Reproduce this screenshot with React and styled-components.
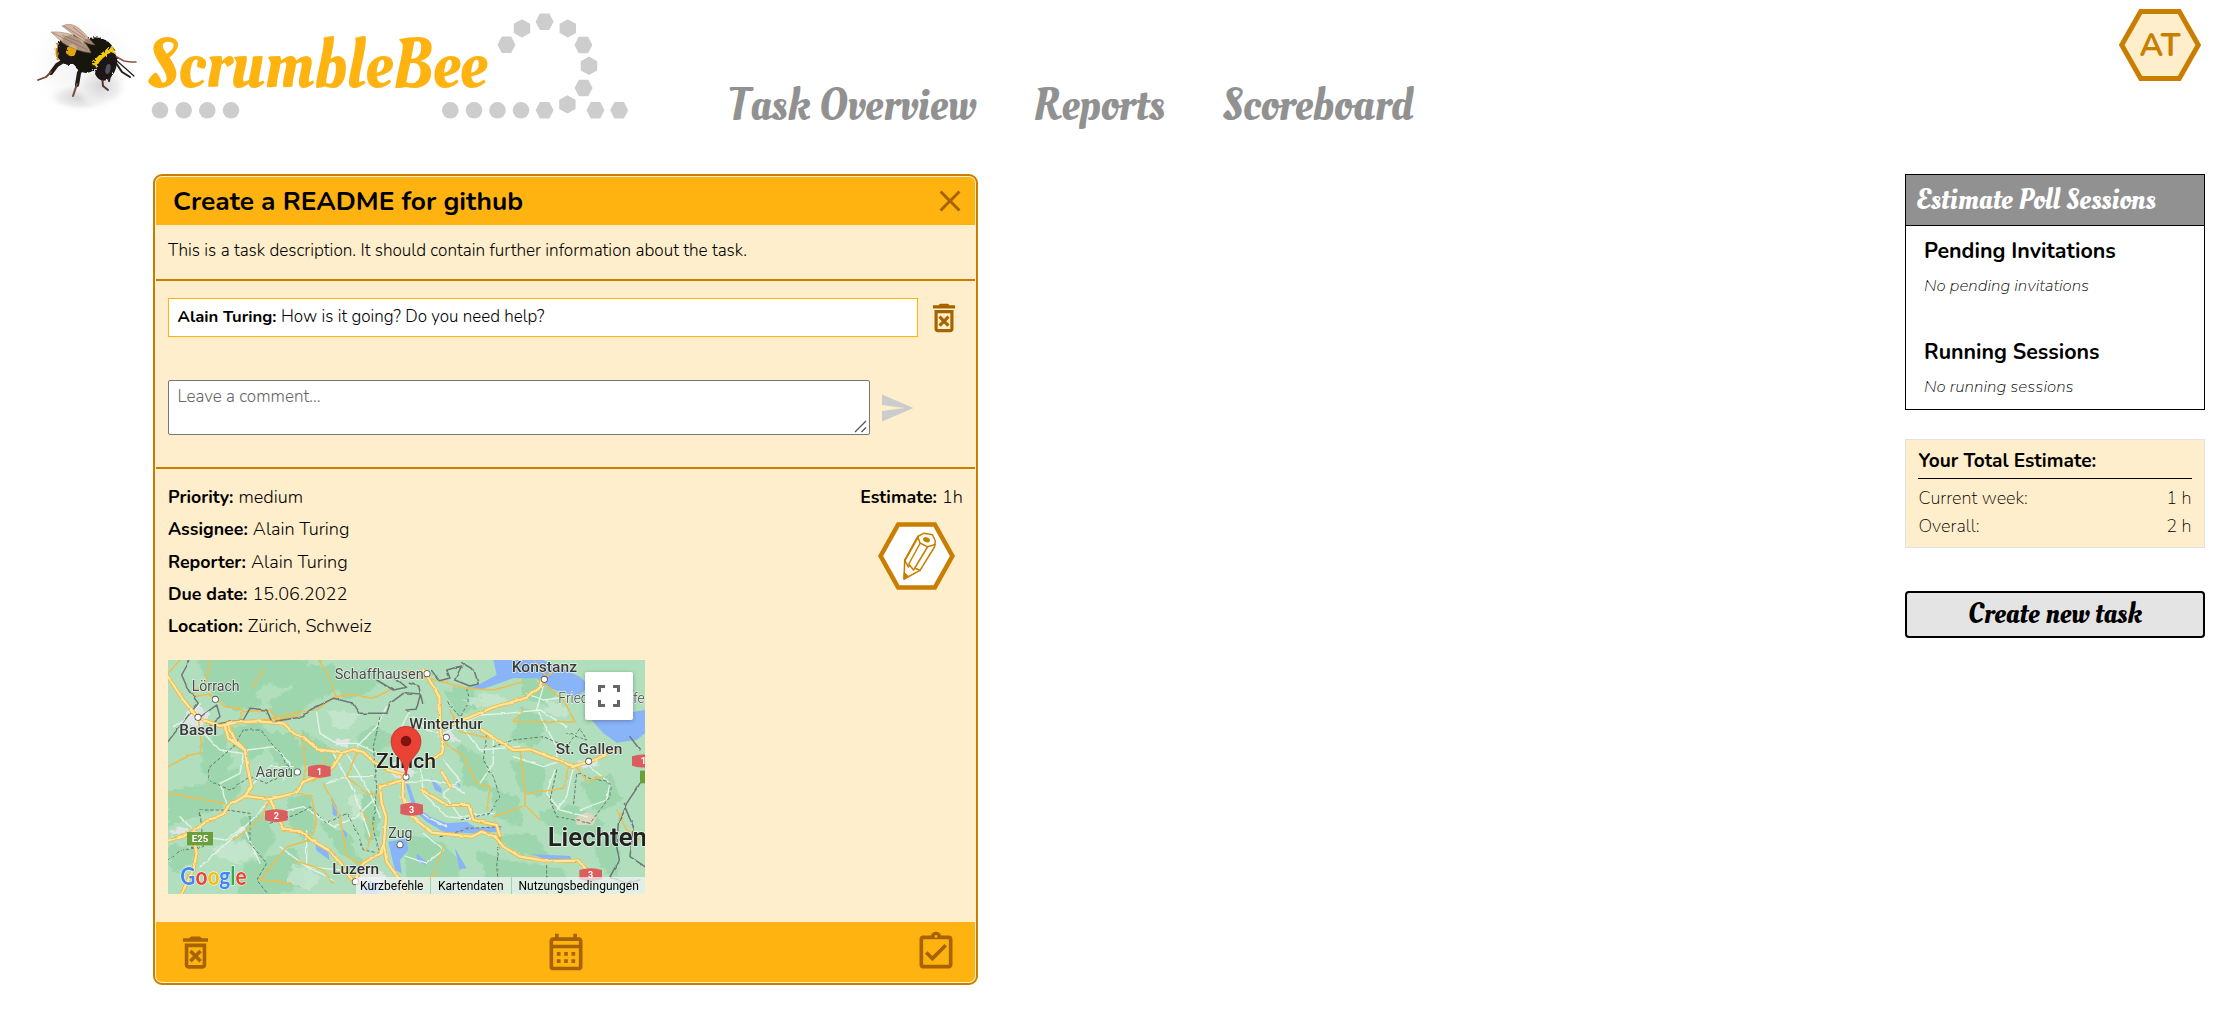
import React from 'react';
import styled, { createGlobalStyle } from 'styled-components';
import {
  MdOutlineDeleteForever,
  MdOutlineCalendarMonth,
  MdOutlineAssignmentTurnedIn,
  MdSend,
  MdClose,
} from 'react-icons/md';

const color = {
  honey: '#ffb310',
  amber: '#c97e00',
  brown: '#a66300',
  cream: '#ffeecb',
  grey: '#919191',
};
const sans = '"Nunito", "Open Sans", "Noto Sans", sans-serif';
const script = '"Oleo Script", "Lobster Two", "Liberation Serif", serif';

const GlobalStyle = createGlobalStyle`
  *, *::before, *::after { box-sizing: border-box; }
  body {
    margin: 0;
    background: #fff;
    color: #000;
    font-family: ${sans};
    font-weight: 300;
    overflow: hidden;
  }
`;

/* ---------- shared text ---------- */

const Text = styled.span`
  display: block;
  white-space: pre;
  font-size: ${(p) => p.$size || 17.15}px;
  font-weight: ${(p) => p.$weight || 300};
  font-style: ${(p) => (p.$italic ? 'italic' : 'normal')};
  line-height: ${(p) => p.$line || 24}px;
`;

const ScriptText = styled.span`
  display: block;
  font-family: ${script};
  font-weight: 400;
  font-size: ${(p) => p.$size}px;
  line-height: 1.2;
  white-space: nowrap;
  color: ${(p) => p.$color};
`;

/* ---------- page frame ---------- */

const Page = styled.div`
  width: 2227px;
  height: 1010px;
  display: flex;
  flex-direction: column;
`;

const Header = styled.header`
  display: flex;
  align-items: flex-start;
  height: 174px;
  padding: 0 26px 0 30px;
`;

const Brand = styled.svg`
  width: 620px;
  height: 130px;
  flex: none;
`;

const Nav = styled.nav`
  display: flex;
  gap: 57.5px;
  margin-left: 78px;
  padding-top: 78.5px;
`;

const Avatar = styled.svg`
  width: 82px;
  height: 74px;
  margin: 8px 0 0 auto;
`;

const Main = styled.main`
  display: flex;
  justify-content: space-between;
  align-items: flex-start;
  padding: 0 22px 0 153px;
`;

/* ---------- task card ---------- */

const Card = styled.article`
  width: 825px;
  height: 811px;
  display: flex;
  flex-direction: column;
  padding: 1px;
  border: 2px solid ${color.amber};
  border-radius: 9px;
  background: ${color.cream};
`;

const CardHeader = styled.div`
  height: 48px;
  flex: none;
  display: flex;
  align-items: center;
  justify-content: space-between;
  padding: 0 7px 0 17px;
  border-radius: 6px 6px 0 0;
  background: ${color.honey};
`;

const IconButton = styled.button`
  display: flex;
  padding: 0;
  border: 0;
  background: none;
  color: ${(p) => (p.$muted ? '#cccccc' : color.brown)};
`;

const Section = styled.section`
  flex: ${(p) => (p.$height ? 'none' : '1')};
  height: ${(p) => (p.$height ? `${p.$height}px` : 'auto')};
  padding: ${(p) => p.$pad || '12px'};
  border-bottom: ${(p) => (p.$height ? `2px solid ${color.amber}` : '0')};
`;

const CommentRow = styled.div`
  display: flex;
  align-items: center;
  gap: 7px;
`;

const Comment = styled.div`
  display: flex;
  align-items: center;
  gap: 4.5px;
  width: 750px;
  height: 39px;
  padding: 0 8.5px 1px;
  border: 1px solid ${color.honey};
  background: #fff;
`;

const ComposeRow = styled(CommentRow)`
  margin-top: 43px;
  gap: 9px;
`;

const CommentField = styled.div`
  position: relative;
  width: 702px;
  height: 55px;
`;

const CommentInput = styled.textarea`
  display: block;
  width: 100%;
  height: 100%;
  padding: 4px 8.5px;
  border: 1px solid #767676;
  border-radius: 2px;
  background: #fff;
  resize: none;
  font-family: ${sans};
  font-weight: 300;
  font-size: 17px;
  line-height: 24px;
  &::placeholder { color: #666; }
`;

const ResizeGrip = styled.svg`
  position: absolute;
  right: 3px;
  bottom: 2px;
  width: 13px;
  height: 13px;
`;

const Details = styled.div`
  display: flex;
  justify-content: space-between;
`;

const Facts = styled.div`
  display: flex;
  flex-direction: column;
`;

const Fact = styled.div`
  display: flex;
  gap: 5px;
  height: 32.3px;
`;

const EstimateColumn = styled.div`
  display: flex;
  flex-direction: column;
  align-items: flex-end;
`;

const EditButton = styled.svg`
  width: 77px;
  height: 68px;
  margin: 5px 8px 0 0;
`;

const CardFooter = styled.footer`
  height: 60px;
  flex: none;
  display: flex;
  align-items: center;
  justify-content: space-between;
  padding: 0 17px 0 18px;
  border-radius: 0 0 6px 6px;
  background: ${color.honey};
`;

/* ---------- map ---------- */

const MapFrame = styled.div`
  position: relative;
  width: 477px;
  height: 234px;
  margin-top: 13.5px;
  overflow: hidden;
`;

const MapCanvas = styled.svg`
  display: block;
  width: 477px;
  height: 234px;
`;

const FullscreenButton = styled.button`
  position: absolute;
  top: 12px;
  right: 12px;
  width: 48px;
  height: 48px;
  display: flex;
  align-items: center;
  justify-content: center;
  padding: 0;
  border: 0;
  border-radius: 2px;
  background: #fff;
  box-shadow: 0 1px 4px rgba(0, 0, 0, 0.3);
`;

const MapLegal = styled.div`
  position: absolute;
  right: 0;
  bottom: 0;
  display: flex;
  gap: 1px;
`;

const LegalItem = styled.span`
  width: ${(p) => p.$width}px;
  height: 17px;
  padding-left: ${(p) => p.$inset}px;
  white-space: nowrap;
  background: rgba(245, 245, 245, 0.72);
  font-family: Roboto, sans-serif;
  font-weight: 400;
  font-size: 12px;
  line-height: 18px;
`;

/* ---------- sidebar ---------- */

const Sidebar = styled.aside`
  width: 300px;
  display: flex;
  flex-direction: column;
`;

const Sessions = styled.section`
  height: 236px;
  border: 1px solid #000;
`;

const SessionsHeader = styled.div`
  height: 51px;
  padding: 8px 10px 0;
  border-bottom: 1px solid #000;
  background: ${color.grey};
`;

const SessionGroup = styled.div`
  display: flex;
  flex-direction: column;
  gap: 11px;
  padding: 12px 18px 0;
  height: 100.5px;
`;

const Totals = styled.section`
  height: 109px;
  margin-top: 29px;
  padding: 7px 12px 0;
  border: 1px solid #e2e2e2;
  background: ${color.cream};
`;

const TotalsTitle = styled.div`
  height: 32px;
  padding: 2px 0.5px 0;
  margin-bottom: 7px;
  border-bottom: 1px solid #000;
`;

const TotalRow = styled.div`
  display: flex;
  justify-content: space-between;
  height: 28px;
  padding: 0 0.5px 0 0.5px;
`;

const CreateButton = styled.button`
  height: 47px;
  margin-top: 43px;
  padding: 0;
  display: flex;
  align-items: center;
  justify-content: center;
  border: 2px solid #000;
  border-radius: 4px;
  background: #e4e4e4;
`;

/* ---------- drawings ---------- */

const flatHex = (x, y) =>
  `${x - 9},${y} ${x - 4.7},${y - 8.3} ${x + 4.7},${y - 8.3} ${x + 9},${y} ${x + 4.7},${y + 8.3} ${x - 4.7},${y + 8.3}`;
const tallHex = (x, y) =>
  `${x},${y - 9.2} ${x + 8.2},${y - 4.6} ${x + 8.2},${y + 4.6} ${x},${y + 9.2} ${x - 8.2},${y + 4.6} ${x - 8.2},${y - 4.6}`;

const dots = [160, 183.7, 207.3, 231, 450.3, 474, 497.5, 521];
const flats = [[506.5, 44.7], [544.6, 21.8], [583.4, 45], [583.6, 88], [544.6, 110.3], [595.5, 110.3], [619.2, 110.3]];
const talls = [[522, 28.4], [567.8, 28.4], [589, 65.8], [567.4, 104.4]];

function Bee() {
  return (
    <g>
      <defs>
        <radialGradient id="beeGlow">
          <stop offset="0" stopColor="#d3d3d5" />
          <stop offset="0.6" stopColor="#ececed" />
          <stop offset="1" stopColor="#ffffff" stopOpacity="0" />
        </radialGradient>
        <filter id="fur" x="-10%" y="-10%" width="120%" height="120%">
          <feTurbulence type="fractalNoise" baseFrequency="0.5" numOctaves="2" seed="4" />
          <feDisplacementMap in="SourceGraphic" scale="4" />
        </filter>
      </defs>
      <ellipse cx="84" cy="66" rx="58" ry="54" fill="url(#beeGlow)" opacity=".3" />
      <ellipse cx="80" cy="97" rx="34" ry="15" fill="url(#beeGlow)" />
      <ellipse cx="101" cy="86" rx="28" ry="22" fill="url(#beeGlow)" opacity=".9" />
      <g fill="none" stroke="#251b15" strokeLinecap="round" strokeLinejoin="round">
        <path d="M70 57 L57 65 L51 73" strokeWidth="4" />
        <path d="M51 72 L46 77 L38 80" strokeWidth="1.8" stroke="#6b4331" />
        <path d="M83 66 L79 73 L77 85" strokeWidth="4.2" />
        <path d="M77 84 L75 90 L73 96" strokeWidth="2" stroke="#7a4a35" />
        <path d="M98 69 L102 76 L103 86 L108 90" strokeWidth="2" stroke="#54392c" />
        <path d="M111 70 L109 81" strokeWidth="2" />
        <path d="M115 56 L124 61 L131 62 L136 62" strokeWidth="1.6" stroke="#8a5640" />
        <path d="M116 63 L122 72 L130 77" strokeWidth="2" />
        <path d="M117 61 L125 68 L134 76" strokeWidth="1.2" />
      </g>
      <g filter="url(#fur)">
        <ellipse cx="70" cy="50" rx="13" ry="15" fill="#1b1813" transform="rotate(12 70 50)" />
        <path d="M58 43 q-3 8 0 17" stroke="#c88e13" strokeWidth="2" fill="none" />
        <ellipse cx="86" cy="58" rx="13" ry="15" fill="#15130f" />
        <path d="M68 45 q7 -2 9 3 q-1 5 -3 8 q-5 1 -8 -3 z" fill="#e2a60d" />
        <ellipse cx="98" cy="52" rx="18" ry="14" fill="#17140f" transform="rotate(24 98 52)" />
        <path d="M114 50 Q102 55 95 66" stroke="#f2c90d" strokeWidth="7.5" fill="none" />
        <path d="M111 52 q7 2 6 11 q-1 10 -8 16 q-9 5 -14 -5 q1 -10 8 -16 z" fill="#1a1716" />
      </g>
      <ellipse cx="108" cy="69" rx="2.5" ry="5" fill="#51535a" transform="rotate(12 108 69)" />
      <path d="M62 26 Q72 21 82 31 L95 45 Q84 44 74 35 z" fill="#c9a58c" opacity=".8" stroke="#8b6650" strokeWidth=".6" />
      <path d="M51 32 Q66 31 79 38 Q88 44 91 53 Q75 51 63 43 z" fill="#cfb19b" opacity=".82" stroke="#84604b" strokeWidth=".6" />
      <path d="M53 33 L88 50 M62 35 L82 43 M64 26 L91 43 M73 27 L85 37" stroke="#7c5946" strokeWidth=".5" fill="none" />
    </g>
  );
}

function BrandMark() {
  return (
    <Brand viewBox="30 0 620 130" role="img" aria-label="ScrumbleBee">
      <Bee />
      <text
        x="147" y="87.2" textLength="340" lengthAdjust="spacingAndGlyphs"
        fill={color.honey} fontFamily={script} fontSize="69"
      >
        ScrumbleBee
      </text>
      <g fill="#cdcdcd">
        {dots.map((x) => <circle key={x} cx={x} cy="110.3" r="8.3" />)}
        {flats.map(([x, y]) => <polygon key={`${x}-${y}`} points={flatHex(x, y)} />)}
        {talls.map(([x, y]) => <polygon key={`${x}-${y}`} points={tallHex(x, y)} />)}
      </g>
    </Brand>
  );
}

const forest = [
  'M120 30 L440 30 L430 80 L360 110 L330 90 L270 130 L300 160 L230 180 L190 150 L150 110 Z',
  'M440 60 L520 50 L540 110 L500 130 L450 150 L420 190 L350 200 L330 160 L400 120 Z',
  'M210 240 L300 220 L330 270 L280 320 L230 290 Z',
  'M320 250 L400 260 L430 330 L400 370 L350 330 Z',
  'M430 250 L520 310 L510 350 L430 345 Z',
  'M30 430 L130 410 L230 360 L240 420 L180 470 L90 500 L30 520 Z',
  'M130 270 L190 260 L210 340 L170 390 L130 360 Z',
  'M30 590 L100 600 L90 640 L40 660 Z',
  'M250 510 L310 500 L340 570 L300 620 L250 570 Z',
  'M390 450 L440 440 L460 520 L440 570 L400 530 Z',
  'M490 520 L560 560 L600 640 L540 600 Z',
  'M600 260 L650 230 L690 270 L660 300 L610 300 Z',
  'M530 100 L620 60 L650 90 L610 130 L560 140 Z',
  'M250 650 L400 600 L430 700 L330 740 L240 740 Z',
  'M610 440 L650 430 L650 560 L620 560 Z',
  'M740 560 L840 580 L900 640 L870 740 L750 740 Z',
  'M900 290 L970 330 L980 420 L920 400 Z',
  'M1090 180 L1150 210 L1130 280 L1060 270 Z',
  'M1060 340 L1150 350 L1140 430 L1090 420 Z',
  'M1000 420 L1070 450 L1080 520 L1010 500 Z',
  'M1140 490 L1240 470 L1330 520 L1300 570 L1180 540 Z',
  'M860 130 L930 110 L960 160 L900 190 Z',
  'M1020 560 L1120 560 L1160 620 L1070 600 Z',
  'M1270 400 L1350 380 L1380 450 L1310 480 Z',
  'M960 610 L1060 640 L1200 660 L1240 740 L1000 740 Z',
  'M1310 590 L1370 560 L1370 670 L1330 650 Z',
  'M1100 80 L1180 130 L1160 160 L1090 130 Z',
];

const highways = [
  'M24 80 L70 150 L115 205 L180 228 L230 217 L290 214 L370 220 L410 258 L432 262 L472 298 L520 304 L545 310 L580 298 L610 306 L640 335 L690 362 L730 372',
  'M195 228 L205 265 L255 300 L262 350 L275 410 L255 438 L205 468 L190 492 L140 514 L95 548 L24 572',
  'M255 438 L330 447 L345 480 L372 540 L420 543 L455 570 L510 603 L550 652 L575 690',
  'M330 447 L405 430 L430 395 L480 375 L520 350 L545 312',
  'M730 375 L728 440 L745 490 L815 548 L870 553 L935 560 L965 545 L1005 560 L1030 590 L1080 620 L1165 634 L1255 632 L1280 660',
  'M730 390 L660 410 L665 460 L678 500 L672 580 L660 610 L610 640 L585 690',
  'M672 590 L680 635 L720 690 L735 735',
  'M790 60 L838 140 L842 250 L850 290 L845 310 L800 340',
  'M880 222 L1000 172 L1100 143 L1140 110 L1147 85',
  'M965 240 L1060 300 L1110 298 L1240 349 L1290 335 L1370 300',
  'M845 365 L872 410',
  'M785 420 L860 465 L925 465 L940 510 L1010 525 L1020 560',
  'M100 560 L110 610 L100 660 L60 740',
  'M205 225 L225 270 L250 294',
];

const secondary = [
  'M24 70 L60 30 M100 140 L150 132 L195 170 L245 178 L240 220',
  'M115 205 L125 285 L120 308 L90 315 L24 350',
  'M290 215 L400 190 L470 180 L515 145 L560 132 L640 145 L690 120',
  'M245 185 L330 180 L350 210 L420 195',
  'M430 265 L435 355 L430 400 L485 380 L495 320',
  'M490 400 L540 500 L560 620 L620 650',
  'M405 430 L455 440 L470 520 L450 570 L380 590 L300 690 L390 700',
  'M590 310 L560 380 L620 430 L665 440',
  'M24 430 L190 460 M330 447 L300 510 L220 570',
  'M870 180 L900 245 L990 265',
  'M1080 300 L1095 430 L1095 465 L1140 510',
  'M1095 432 L1210 415 L1226 350',
  'M1140 90 L1210 150 L1245 215 L1060 215 L1090 180',
  'M1000 500 L1060 480 L1095 465 M1240 340 L1280 390 L1330 380',
  'M845 260 L870 290 L910 320 L950 400 L990 410 L980 480',
  'M1370 480 L1400 540 L1440 570 M1120 30 L1160 80 L1200 50',
  'M480 30 L510 90 L530 145 M150 30 L140 90 L100 130 M310 60 L275 115',
  'M600 480 L640 530 L620 600 M730 60 L790 80 L920 115 L1000 120 L1090 95',
  'M850 590 L820 680 L730 740 M400 630 L490 660 L520 700',
];

const minor = [
  'M130 250 L180 300 L250 310 L240 370 L180 400 L200 460', 'M260 300 L340 290 L390 340 L370 390',
  'M270 410 L330 350 L400 350 M60 500 L120 560 L200 570 L250 530 L300 640',
  'M120 650 L200 580 L245 540 L285 500 L330 450', 'M345 490 L430 470 L520 530 L590 500 L650 440',
  'M520 310 L580 420 L620 530 L630 560', 'M555 300 L630 430 L660 500', 'M590 290 L650 230 L680 170',
  'M500 400 L570 380 L650 380', 'M440 545 L440 650 L520 690', 'M360 590 L440 650 L540 660',
  'M120 160 L90 200 L40 230', 'M650 310 L590 280 L530 280 L480 250 L470 190',
  'M850 250 L960 195 L1040 190 L1140 180 L1220 230', 'M890 210 L960 300 L1080 290',
  'M1150 110 L1130 180 L1190 290 L1190 330', 'M850 330 L900 390 L850 430 L900 500 L1000 490',
  'M780 350 L790 430 L860 500 L960 510', 'M1000 260 L1000 340 L960 400', 'M1185 360 L1160 430 L1200 480 L1280 500',
  'M1240 350 L1220 440 L1190 480', 'M1290 350 L1350 400 L1340 450 L1260 480', 'M1100 130 L1150 150 L1230 140',
  'M720 440 L800 500 L860 530', 'M720 400 L800 390 L870 400 L910 430', 'M1060 320 L1150 350 L1210 330',
  'M760 200 L800 240 L850 250 M750 180 L720 240', 'M790 550 L850 600 L800 640 L740 620',
];

const dashes = [
  'M250 240 L220 290 L150 350 L145 390 L210 420 L270 380 L320 400 L390 360 L360 310 L300 240 Z',
  'M120 480 L200 480 L270 490 L270 580 L320 640 L290 690 L330 740',
  'M330 520 L420 490 L450 470 L500 520 L560 490 L590 540 L610 600 L660 610 L640 540 L650 410 L640 290 L660 200',
  'M24 630 L70 600 L130 590 L120 480', 'M980 255 L970 330 L1000 380 L1020 440 L990 490 L900 510',
  'M1000 290 L1060 270 L1150 260 L1220 290 L1260 235 L1280 270 L1220 250', 'M1190 360 L1170 450 L1190 500 L1290 520 L1350 440 L1350 400 L1250 370 L1240 470',
  'M840 560 L930 535 L1020 530', 'M1020 560 L1010 650 L1020 740', 'M1160 630 L1160 740 M860 155 L900 200 L925 160 L920 110',
];

const borders = [
  'M90 30 L65 75 L85 120 L115 160 L70 215 L24 275',
  'M115 205 L170 165 L180 200 L150 225 L250 210 L270 175 L320 180 L335 215 L430 200 L450 180 L520 145 L580 160 L600 190 L680 190 L690 160 L730 130',
  'M650 90 L700 120 L740 112 L720 96 L695 80 M735 128 L782 132 L768 178 L738 180 M748 100 L776 108 L788 160',
  'M815 62 L838 92 L870 84 L860 60 L905 48 L884 90 L930 108 L955 102 L942 60 L905 38',
  'M1440 400 L1400 460 L1375 520 L1370 590 L1378 630 L1350 680 L1400 700 L1440 690',
  'M1390 460 L1420 530 L1410 620 L1455 650 M1410 260 L1440 300',
];

const cities = [
  ['Lörrach', 95, 124, 42, 144, '#4a4a4a', 400, 166, 148],
  ['Basel', 58, 256, 42, 114, '#3a3a3a', 600, 114, 202],
  ['Aarau', 287, 381, 42, 112, '#4a4a4a', 400, 412, 366],
  ['Schaffhausen', 524, 87, 42, 267, '#4a4a4a', 400, 801, 71],
  ['Konstanz', 1055, 66, 42, 196, '#3a3a3a', 500, 1153, 88],
  ['Winterthur', 748, 237, 42, 220, '#333', 500, 859, 262],
  ['Zürich', 648, 354, 61, 180, '#222', 500, 738, 381],
  ['St. Gallen', 1187, 311, 42, 200, '#3a3a3a', 500, 1286, 334],
  ['Zug', 685, 564, 42, 72, '#444', 400, 720, 584],
  ['Luzern', 517, 673, 42, 140, '#333', 500, 586, 695],
];

const shields = [[478, 364, '1'], [349, 497, '2'], [755, 478, '3'], [1292, 674, '3'], [1450, 333, '1']];

function MapDrawing() {
  return (
    <MapCanvas viewBox="24 30 1431 702" preserveAspectRatio="none">
      <defs>
        <filter id="organic" x="-5%" y="-5%" width="110%" height="110%">
          <feTurbulence type="fractalNoise" baseFrequency="0.05" numOctaves="3" seed="7" />
          <feDisplacementMap in="SourceGraphic" scale="26" xChannelSelector="R" yChannelSelector="G" />
        </filter>
        <filter id="wander" x="-5%" y="-5%" width="110%" height="110%">
          <feTurbulence type="fractalNoise" baseFrequency="0.04" numOctaves="2" seed="3" />
          <feDisplacementMap in="SourceGraphic" scale="8" xChannelSelector="R" yChannelSelector="G" />
        </filter>
      </defs>
      <rect x="24" y="30" width="1431" height="702" fill="#b1dfbd" />
      <g fill="#9bd5ab" filter="url(#organic)">
        {forest.map((d) => <path key={d} d={d} strokeLinejoin="round" stroke="#9bd5ab" strokeWidth="14" opacity=".85" />)}
      </g>
      <g fill="#c7e6cf" opacity=".8" filter="url(#organic)">
        <path d="M150 590 L260 570 L300 610 L240 640 L180 630 Z M500 180 L600 190 L570 240 L520 230 Z M560 440 L600 430 L610 510 L580 500 Z" />
        <path d="M1160 150 L1230 170 L1220 200 L1150 190 Z M900 150 L1000 130 L1060 160 L960 175 Z M400 640 L480 680 L450 720 L380 700 Z" />
      </g>
      <g fill="#dfe5e2" filter="url(#organic)">
        <path d="M75 190 L120 160 L150 200 L130 230 L70 220 Z M530 265 L570 270 L560 290 L520 285 Z M700 330 L730 350 L770 370 L735 395 L690 370 Z" />
        <path d="M825 250 L880 245 L900 275 L850 275 Z M1250 330 L1310 325 L1320 350 L1260 350 Z M600 640 L650 650 L690 700 L600 700 Z M230 530 L260 535 L245 555 Z M40 540 L90 530 L80 550 L30 560 Z" />
      </g>
      <path d="M1245 505 L1280 485 L1310 500 L1300 525 L1250 525 Z" fill="#ddd6c0" />
      <g fill="#8ab4f8">
        <path d="M1000 30 L1150 30 L1260 80 L1290 110 L1250 140 L1170 115 L1130 85 L1060 85 L1030 95 L960 120 L935 115 L1010 75 Z" />
        <path d="M1290 205 L1455 180 L1455 250 L1430 270 L1370 278 L1330 250 Z" />
        <path d="M735 395 L748 405 L770 470 L810 500 L860 520 L920 515 L950 535 L1025 528 L1020 545 L935 550 L850 545 L800 515 L760 480 Z" />
        <path d="M515 440 L530 470 L532 500 L518 495 Z M545 535 L562 550 L558 568 Z M465 582 L505 605 L508 630 L470 602 Z" />
        <path d="M685 575 L740 565 L745 600 L720 630 L725 670 L705 660 L695 620 Z M885 595 L920 655 L898 658 Z M770 610 L800 635 L795 645 L770 630 Z" />
        <path d="M812 385 L845 415 L845 430 L825 420 Z M890 398 L902 404 L898 413 Z M1110 612 L1230 618 L1235 628 L1160 628 Z M630 690 L660 705 L650 740 L600 735 Z" />
      </g>
      <g fill="none" strokeLinejoin="round" strokeLinecap="round" filter="url(#wander)">
        <g stroke="#e4f4e8" strokeWidth="4">{minor.map((d) => <path key={d} d={d} />)}</g>
        <g stroke="#63796a" strokeWidth="3" strokeDasharray="8 8">{dashes.map((d) => <path key={d} d={d} />)}</g>
        <g stroke="#eebd4e" strokeWidth="4.5">{secondary.map((d) => <path key={d} d={d} />)}</g>
        <g stroke="#6f7673" strokeWidth="4.5">{borders.map((d) => <path key={d} d={d} />)}</g>
        <g stroke="#f5b73f" strokeWidth="12">{highways.map((d) => <path key={d} d={d} />)}</g>
        <g stroke="#ffe7a3" strokeWidth="6.5">{highways.map((d) => <path key={d} d={d} />)}</g>
      </g>
      <g fontFamily="Roboto, sans-serif" fontWeight="700" textAnchor="middle" fontSize="27" fill="#fff">
        {shields.map(([x, y, n]) => (
          <g key={`${x}${y}`}>
            <path d={`M${x - 34} ${y - 14} Q${x} ${y - 25} ${x + 34} ${y - 14} V${y + 14} Q${x} ${y + 25} ${x - 34} ${y + 14} Z`} fill="#dc5d5d" />
            <text x={x} y={y + 10}>{n}</text>
          </g>
        ))}
        <rect x="81" y="546" width="78" height="40" fill="#6a9f3b" />
        <text x="120" y="576" fontSize="29">E25</text>
        <rect x="1440" y="362" width="30" height="38" fill="#6a9f3b" />
      </g>
      <g fontFamily="Roboto, sans-serif" paintOrder="stroke" stroke="#e8f3e9" strokeWidth="4" strokeLinejoin="round">
        {cities.map(([name, x, y, size, width, fill, weight, cx, cy]) => (
          <g key={name}>
            <circle cx={cx} cy={cy} r="8" fill="#fff" stroke="#555" strokeWidth="5" />
            <text x={x} y={y} fontSize={size} textLength={width} fill={fill} fontWeight={weight} lengthAdjust="spacingAndGlyphs">{name}</text>
          </g>
        ))}
        <text x="1195" y="159" fontSize="42" fill="#4a4a4a" textLength="282" lengthAdjust="spacingAndGlyphs">Friedrichshafen</text>
        <text x="1163" y="588" fontSize="76" fill="#222" fontWeight="600" textLength="298" lengthAdjust="spacingAndGlyphs">Liechten</text>
      </g>
      <path d="M738 378 Q733 340 712 318 Q693 298 693 274 A45 45 0 0 1 783 274 Q783 298 764 318 Q743 340 738 378 Z" fill="#ea4335" stroke="#c5221f" strokeWidth="2" />
      <circle cx="738" cy="273" r="16" fill="#811411" />
      <text x="61" y="705" fontFamily="Lato, sans-serif" fontSize="72" fontWeight="700" textLength="199" lengthAdjust="spacingAndGlyphs" paintOrder="stroke" stroke="#fff" strokeWidth="3">
        <tspan fill="#4285f4">G</tspan><tspan fill="#ea4335">o</tspan><tspan fill="#fbbc05">o</tspan><tspan fill="#4285f4">g</tspan><tspan fill="#34a853">l</tspan><tspan fill="#ea4335">e</tspan>
      </text>
    </MapCanvas>
  );
}

function Map() {
  return (
    <MapFrame>
      <MapDrawing />
      <FullscreenButton aria-label="Vollbild">
        <svg width="22" height="22" viewBox="0 0 22 22" fill="none" stroke="#666" strokeWidth="3">
          <path d="M1.5 7V1.5H7M15 1.5H20.5V7M20.5 15V20.5H15M7 20.5H1.5V15" />
        </svg>
      </FullscreenButton>
      <MapLegal>
        <LegalItem $width={74} $inset={4}>Kurzbefehle</LegalItem>
        <LegalItem $width={80} $inset={7}>Kartendaten</LegalItem>
        <LegalItem $width={133} $inset={6.5}>Nutzungsbedingungen</LegalItem>
      </MapLegal>
    </MapFrame>
  );
}

function EditHexagon() {
  return (
    <EditButton viewBox="0 0 77 68" fill="none" stroke={color.amber}>
      <polygon points="2.6,34 20.2,2.5 56.8,2.5 74.4,34 56.8,65.5 20.2,65.5" fill="#fff" strokeWidth="4.6" />
      <g strokeWidth="1.5" strokeLinejoin="round" strokeLinecap="round">
        <path d="M39.7 14.5 L46 11.2 L54.5 12.8 L57.3 19 L56.5 25 L42 48.3 L26 57 L26.7 38.5 Z" />
        <path d="M39.7 14.5 L42 21 L49.5 24.8 L57.3 22.5" />
        <path d="M42 21.5 L30.8 42 M49.5 25 L36.5 46.5 M26.7 38.5 L30.5 45 L31.5 43 L35.5 48 L37 46.3 L42 48.3" />
        <path d="M39.7 15.5 L27 38" strokeWidth="2" />
        <ellipse cx="48.5" cy="17.8" rx="2.8" ry="1.7" fill={color.amber} transform="rotate(20 48.5 17.8)" />
        <path d="M26 57 L26.4 51 L30 54.5 Z" fill={color.amber} />
      </g>
    </EditButton>
  );
}

const facts = [
  ['Priority:', 'medium'],
  ['Assignee:', 'Alain Turing'],
  ['Reporter:', 'Alain Turing'],
  ['Due date:', '15.06.2022'],
  ['Location:', 'Zürich, Schweiz'],
];

function FactRow({ label, value }) {
  return (
    <Fact>
      <Text $size={17.8} $weight={700}>{label}</Text>
      <Text $size={18.1}>{value}</Text>
    </Fact>
  );
}

function TaskCard() {
  return (
    <Card>
      <CardHeader>
        <Text $size={26.35} $weight={700} $line={36}>Create a README for github</Text>
        <IconButton aria-label="Close"><MdClose size={36} /></IconButton>
      </CardHeader>
      <Section $height={56} $pad="14px 12px">
        <Text>This is a task description. It should contain further information about the task.</Text>
      </Section>
      <Section $height={188} $pad="17px 12px">
        <CommentRow>
          <Comment>
            <Text $size={16.7} $weight={700}>Alain Turing:</Text>
            <Text $size={17}>How is it going? Do you need help?</Text>
          </Comment>
          <IconButton aria-label="Delete comment"><MdOutlineDeleteForever size={38} /></IconButton>
        </CommentRow>
        <ComposeRow>
          <CommentField>
            <CommentInput placeholder="Leave a comment..." />
            <ResizeGrip viewBox="0 0 13 13" stroke="#555" strokeWidth="1.3">
              <path d="M1 12 L12 1 M7.5 12 L12 7.5" />
            </ResizeGrip>
          </CommentField>
          <IconButton $muted aria-label="Send"><MdSend size={36} /></IconButton>
        </ComposeRow>
      </Section>
      <Section $pad="16px 12px 0">
        <Details>
          <Facts>
            {facts.map(([label, value]) => <FactRow key={label} label={label} value={value} />)}
          </Facts>
          <EstimateColumn>
            <FactRow label="Estimate:" value="1h" />
            <EditHexagon />
          </EstimateColumn>
        </Details>
        <Map />
      </Section>
      <CardFooter>
        <IconButton aria-label="Delete task"><MdOutlineDeleteForever size={43} /></IconButton>
        <IconButton aria-label="Schedule"><MdOutlineCalendarMonth size={44} /></IconButton>
        <IconButton aria-label="Complete"><MdOutlineAssignmentTurnedIn size={44} /></IconButton>
      </CardFooter>
    </Card>
  );
}

export default function App() {
  return (
    <Page>
      <GlobalStyle />
      <Header>
        <BrandMark />
        <Nav>
          <ScriptText $size={44.8} $color={color.grey}>Task Overview</ScriptText>
          <ScriptText $size={44.8} $color={color.grey}>Reports</ScriptText>
          <ScriptText $size={44.8} $color={color.grey}>Scoreboard</ScriptText>
        </Nav>
        <Avatar viewBox="0 0 82 74">
          <polygon points="2.7,37 21.7,3.5 60.3,3.5 79.3,37 60.3,70.5 21.7,70.5" fill={color.cream} stroke={color.amber} strokeWidth="5" />
          <text x="41" y="48" textAnchor="middle" textLength="41" lengthAdjust="spacingAndGlyphs" fill={color.amber} fontFamily={sans} fontWeight="700" fontSize="32">AT</text>
        </Avatar>
      </Header>
      <Main>
        <TaskCard />
        <Sidebar>
          <Sessions>
            <SessionsHeader>
              <ScriptText $size={28.8} $color="#fff">Estimate Poll Sessions</ScriptText>
            </SessionsHeader>
            <SessionGroup>
              <Text $size={21.45} $weight={700} $line={26}>Pending Invitations</Text>
              <Text $size={17} $weight={200} $italic $line={22}>No pending invitations</Text>
            </SessionGroup>
            <SessionGroup>
              <Text $size={21.4} $weight={700} $line={26}>Running Sessions</Text>
              <Text $size={17} $weight={200} $italic $line={22}>No running sessions</Text>
            </SessionGroup>
          </Sessions>
          <Totals>
            <TotalsTitle>
              <Text $size={19.1} $weight={700}>Your Total Estimate:</Text>
            </TotalsTitle>
            <TotalRow>
              <Text $size={18.1} $weight={200}>Current week:</Text>
              <Text $size={18.1} $weight={200}>1 h</Text>
            </TotalRow>
            <TotalRow>
              <Text $size={18.1} $weight={200}>Overall:</Text>
              <Text $size={18.1} $weight={200}>2 h</Text>
            </TotalRow>
          </Totals>
          <CreateButton>
            <ScriptText $size={28.8} $color="#000">Create new task</ScriptText>
          </CreateButton>
        </Sidebar>
      </Main>
    </Page>
  );
}
